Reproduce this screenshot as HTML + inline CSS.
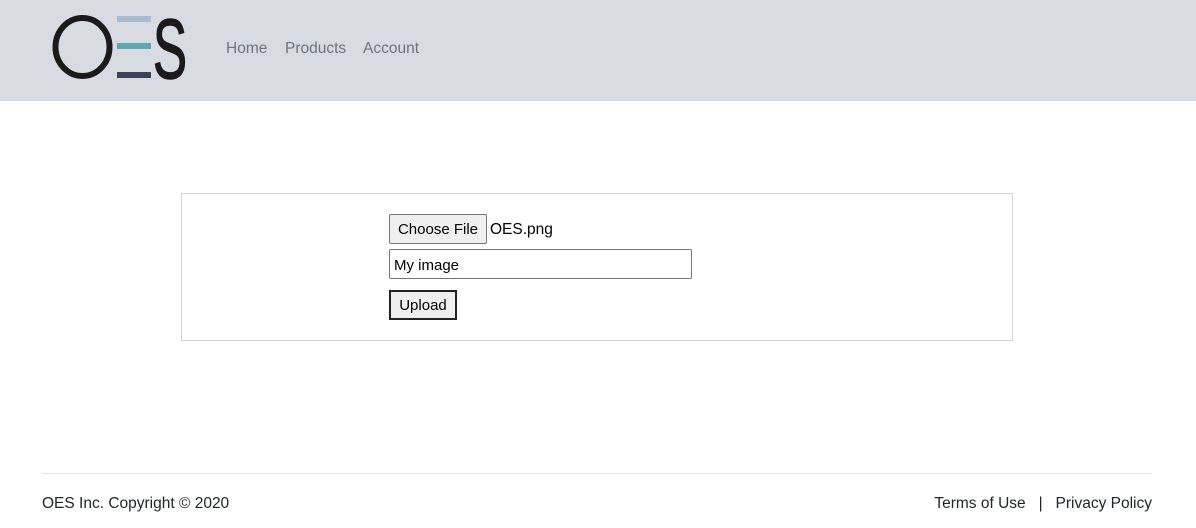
<!DOCTYPE html>
<html><head><style>
*{margin:0;padding:0;box-sizing:border-box}
body{width:1196px;height:528px;background:#fff;font-family:"Liberation Sans",sans-serif;position:relative;overflow:hidden;color:#212529}
.hdr{position:absolute;left:0;top:0;width:1196px;height:101px;background:#d8dbe2}
.nav{position:absolute;top:40px;font-size:15.5px;color:#6c757d}
.abs{position:absolute}
</style></head><body>
<div class="hdr">
<svg class="abs" style="left:50px;top:12px" width="145" height="72" viewBox="50 12 145 72">
<ellipse cx="82.5" cy="47" rx="27" ry="29" fill="none" stroke="#1a1a1a" stroke-width="6"/>
<rect x="117" y="16" width="34" height="6" fill="#aabbd0"/>
<rect x="117" y="43" width="34" height="6" fill="#5fa8b0"/>
<rect x="117" y="72" width="34" height="6" fill="#3c4356"/>
<text x="153" y="78" font-family="Liberation Sans" font-size="84" fill="#1a1a1a" stroke="#1a1a1a" stroke-width="1.5" textLength="34" lengthAdjust="spacingAndGlyphs">S</text>
</svg>
<span class="nav" style="left:226px">Home</span>
<span class="nav" style="left:285px">Products</span>
<span class="nav" style="left:363px">Account</span>
</div>
<div class="abs" style="left:181px;top:193px;width:832px;height:148px;border:1px solid #d3d3d3"></div>
<div class="abs" style="left:389px;top:214px;width:98px;height:30px;background:#efefef;border:1px solid #767676;border-radius:2px;font-size:15px;line-height:30px;text-align:center;color:#000">Choose File</div>
<span class="abs" style="left:490px;top:221px;font-size:15.5px;color:#000">OES.png</span>
<div class="abs" style="left:389px;top:249px;width:303px;height:30px;border:1px solid #767676;border-radius:2px;font-size:15px;padding:7px 4px 0;color:#000">My image</div>
<div class="abs" style="left:389px;top:290px;width:68px;height:30px;background:#efefef;border:2px solid #222;font-size:15px;line-height:28px;text-align:center;color:#000">Upload</div>
<div class="abs" style="left:42px;top:473px;width:1110px;height:1px;background:#e5e5e5"></div>
<span class="abs" style="left:42px;top:495px;font-size:15.5px">OES Inc. Copyright © 2020</span>
<span class="abs" style="right:44px;top:495px;font-size:15.5px">Terms of Use &nbsp; | &nbsp; Privacy Policy</span>
</body></html>
